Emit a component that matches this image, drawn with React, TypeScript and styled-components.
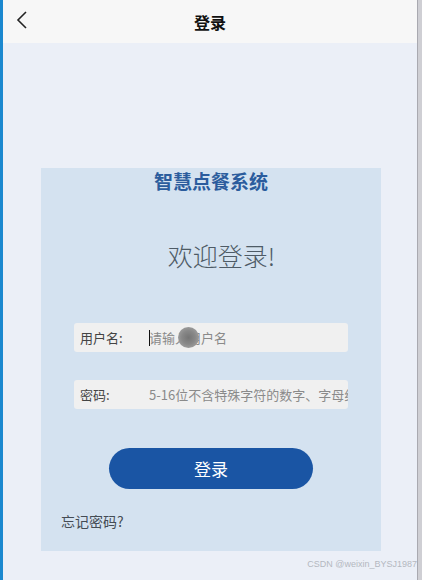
import styled, { createGlobalStyle } from "styled-components";

const GlobalStyle = createGlobalStyle`
  html, body {
    margin: 0;
    padding: 0;
    background: #c9c9ce;
  }
  body {
    font-family: "Noto Sans CJK SC", "Noto Sans", sans-serif;
  }
  * {
    box-sizing: border-box;
  }
`;

const App: React.FC = () => {
  return (
    <Screen>
      <GlobalStyle />
      <EdgeLeft />
      <Phone>
        <Header>
          <BackButton aria-label="返回">
            <svg width="14" height="18" viewBox="0 0 14 18" fill="none">
              <path d="M11 1 L3 9 L11 17" stroke="#222" strokeWidth="1.6" />
            </svg>
          </BackButton>
          <h1>登录</h1>
        </Header>
        <Body>
          <Card>
            <h2 className="brand">智慧点餐系统</h2>
            <h3 className="welcome">欢迎登录!</h3>
            <Field>
              <label>用户名:</label>
              <input placeholder="请输入用户名" />
              <Caret />
              <TouchDot />
            </Field>
            <Field $gap={28}>
              <label>密码:</label>
              <input type="password" placeholder="5-16位不含特殊字符的数字、字母组合" />
            </Field>
            <LoginButton>登录</LoginButton>
            <Forgot>忘记密码?</Forgot>
          </Card>
          <Watermark>CSDN @weixin_BYSJ1987</Watermark>
        </Body>
      </Phone>
      <EdgeRight />
    </Screen>
  );
};

export default App;

const Screen = styled.div`
  display: flex;
  width: 422px;
  height: 580px;
  overflow: hidden;
`;

const EdgeLeft = styled.div`
  width: 3px;
  flex-shrink: 0;
  background: #1b88cf;
`;

const EdgeRight = styled.div`
  flex: 1;
  border-left: 1px solid #a9a9b0;
  background: #cfcfd4;
`;

const Phone = styled.div`
  width: 414px;
  flex-shrink: 0;
  display: flex;
  flex-direction: column;
  background: #ebeff7;
`;

const Header = styled.header`
  position: relative;
  height: 43px;
  flex-shrink: 0;
  display: flex;
  align-items: center;
  justify-content: center;
  background: #f7f7f7;
  h1 {
    margin: 0;
    font-size: 16px;
    font-weight: 700;
    color: #111;
  }
`;

const BackButton = styled.button`
  position: absolute;
  left: 12px;
  top: 11px;
  padding: 0;
  border: none;
  background: none;
  display: flex;
`;

const Body = styled.main`
  flex: 1;
  display: flex;
  flex-direction: column;
  align-items: center;
  padding-top: 125px;
`;

const Card = styled.section`
  width: 340px;
  height: 383px;
  margin-left: 2px;
  padding: 0 33px;
  display: flex;
  flex-direction: column;
  background: #d4e2f0;

  .brand {
    margin: 0;
    text-align: center;
    font-size: 19px;
    line-height: 26px;
    font-weight: 700;
    color: #2b5c9d;
  }
  .welcome {
    margin: 45px 0 0;
    padding-left: 21px;
    text-align: center;
    font-size: 25px;
    line-height: 32px;
    font-weight: 300;
    color: #4e5b66;
  }
`;

const Field = styled.div<{ $gap?: number }>`
  position: relative;
  height: 29px;
  margin-top: ${(p) => p.$gap ?? 52}px;
  display: flex;
  align-items: center;
  border-radius: 3px;
  background: #f0f0f0;

  label {
    width: 75px;
    padding-left: 6px;
    font-size: 13px;
    color: #444;
  }
  input {
    flex: 1;
    min-width: 0;
    border: none;
    outline: none;
    background: transparent;
    padding: 0;
    font-family: inherit;
    font-size: 13px;
    color: #333;
    &::placeholder {
      color: #8a8a8a;
    }
  }
`;

const Caret = styled.span`
  position: absolute;
  left: 75px;
  top: 7px;
  width: 1px;
  height: 16px;
  background: #111;
`;

const TouchDot = styled.span`
  position: absolute;
  left: 104px;
  top: 4px;
  width: 21px;
  height: 21px;
  border-radius: 50%;
  background: radial-gradient(circle, #757575 0%, #888 45%, #9a9a9a 70%, rgba(160, 160, 160, 0.2) 100%);
`;

const LoginButton = styled.button`
  align-self: center;
  width: 204px;
  height: 41px;
  margin-top: 39px;
  border: none;
  border-radius: 21px;
  background: #1a55a4;
  color: #fff;
  font-family: inherit;
  font-size: 17px;
`;

const Forgot = styled.a`
  margin: 22px 0 0 -13px;
  font-size: 14px;
  line-height: 20px;
  color: #444c55;
`;

const Watermark = styled.div`
  align-self: flex-end;
  margin-top: 8px;
  margin-right: 0;
  font-family: "Liberation Sans", sans-serif;
  font-size: 9px;
  color: #b4b8c0;
`;
